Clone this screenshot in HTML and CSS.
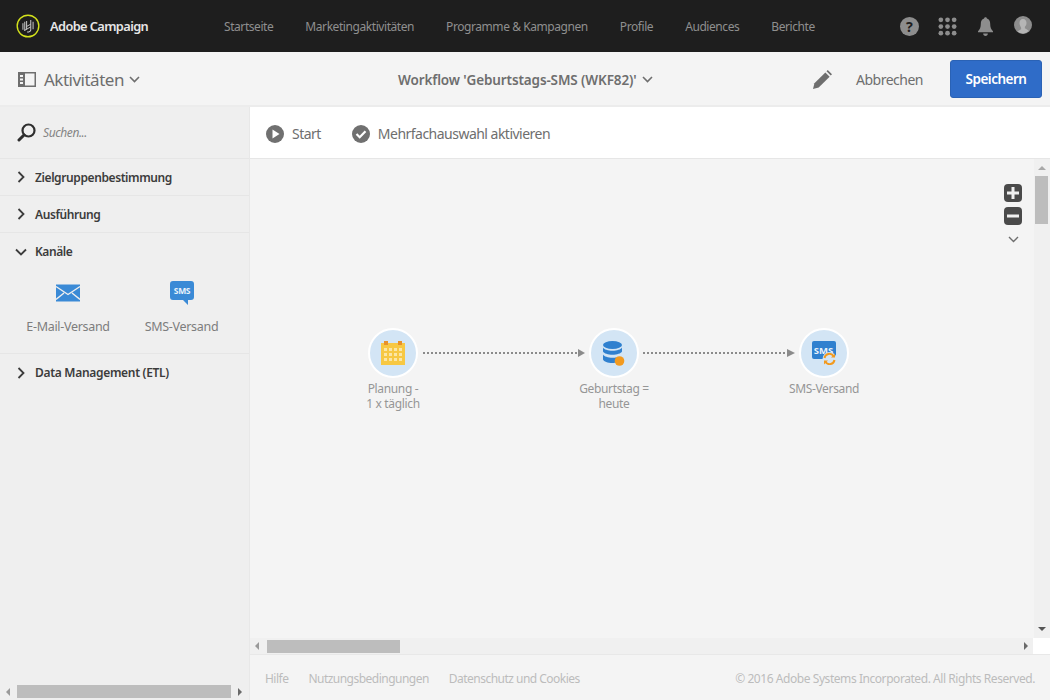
FILE: index.html
```html
<!DOCTYPE html>
<html>
	<head>
		<meta charset="utf-8" />
		<title>Adobe Campaign</title>
		<link rel="stylesheet" href="styles.css">
	</head>
	<body>
		<header class="top-bar">
			<div class="brand">
				<svg class="brand-logo" width="24" height="24" viewBox="0 0 26 26" fill="none">
					<circle cx="13" cy="13" r="11.700" stroke="#d4e21c" stroke-width="1.500"/>
					<path d="M7.500 10v7M9.500 8.500v10M11.500 7.500v9.500M16 6.500v10.500c0 1.500-1.500 2.500-4 2.500M18.500 8.500v8" stroke="#c9c9c9" stroke-width="1.100"/>
					<path d="M11.500 13.500l4.500-2.500M9.500 17.500l6.500-3.500" stroke="#c9c9c9" stroke-width="1"/>
				</svg>
				<span class="brand-name">Adobe Campaign</span>
			</div>
			<nav class="main-nav">
				<a>Startseite</a>
				<a>Marketingaktivitäten</a>
				<a>Programme &amp; Kampagnen</a>
				<a>Profile</a>
				<a>Audiences</a>
				<a>Berichte</a>
			</nav>
			<div class="top-icons">
				<svg width="19" height="19" viewBox="0 0 20 20">
					<circle cx="10" cy="10" r="10" fill="#8d8d8d"/>
					<text x="10" y="15.500" text-anchor="middle" class="help-mark">?</text>
				</svg>
				<svg class="apps" width="19" height="19" viewBox="0 0 20 20" fill="#8d8d8d">
					<circle cx="3" cy="3" r="2.500"/><circle cx="10" cy="3" r="2.500"/><circle cx="17" cy="3" r="2.500"/>
					<circle cx="3" cy="10" r="2.500"/><circle cx="10" cy="10" r="2.500"/><circle cx="17" cy="10" r="2.500"/>
					<circle cx="3" cy="17" r="2.500"/><circle cx="10" cy="17" r="2.500"/><circle cx="17" cy="17" r="2.500"/>
				</svg>
				<svg class="bell" width="15" height="19" viewBox="0 0 16 20" fill="#8d8d8d">
					<path d="M8 0c1 0 1.500.7 1.500 1.500C12 2.300 13 4.500 13 7c0 4 1 6 3 8v1H0v-1c2-2 3-4 3-8 0-2.500 1-4.700 3.500-5.500C6.500.7 7 0 8 0z"/>
					<path d="M5.500 17.500h5C10.500 19 9.500 20 8 20s-2.500-1-2.500-2.500z"/>
				</svg>
				<svg class="avatar" width="18" height="18" viewBox="0 0 18 18">
					<circle cx="9" cy="9" r="9" fill="#8d8d8d"/>
					<path d="M9 3c2.300 0 3.500 1.700 3.500 4 0 1.700-.8 3-1.600 3.800v1.400l3.700 2.300C13 16.800 11.100 17.500 9 17.500s-4-.7-5.600-2l3.700-2.300v-1.400C6.300 10 5.500 8.700 5.500 7 5.500 4.700 6.700 3 9 3z" fill="#b5b5b5"/>
				</svg>
			</div>
		</header>

		<div class="sub-bar">
			<div class="panel-title">
				<svg width="18" height="15" viewBox="0 0 18 15">
					<path d="M0 0h18v15H0z" fill="#6e6e6e"/>
					<path d="M7 1.500h9.500v12H7z" fill="#f4f4f4"/>
					<path d="M2 3h3v2H2zM2 6.500h3v2H2zM2 10h3v2H2z" fill="#f4f4f4"/>
				</svg>
				<span>Aktivitäten</span>
				<svg class="chev" width="11" height="7" viewBox="0 0 11 7"><path d="M1 1l4.500 4.500L10 1" /></svg>
			</div>
			<div class="workflow-title">
				<span>Workflow 'Geburtstags-SMS (WKF82)'</span>
				<svg class="chev" width="11" height="7" viewBox="0 0 11 7"><path d="M1 1l4.500 4.500L10 1" /></svg>
			</div>
			<div class="actions">
				<svg width="19" height="19" viewBox="0 0 20 20" fill="#6e6e6e">
					<path d="M0 20l1.500-6L13 2.500l4.500 4.500L6 18.500z"/>
					<path d="M14.200 1.300L15.500 0 20 4.500l-1.300 1.300z"/>
				</svg>
				<a class="cancel">Abbrechen</a>
				<button class="save-btn">Speichern</button>
			</div>
		</div>

		<div class="main">
			<aside class="sidebar">
				<div class="search">
					<svg width="19" height="19" viewBox="0 0 19 19" fill="none" stroke="#2e2e2e">
						<circle cx="11.500" cy="7.500" r="6" stroke-width="2.200"/>
						<path d="M7 12l-5 5" stroke-width="3" stroke-linecap="round"/>
					</svg>
					<span>Suchen...</span>
				</div>
				<div class="group">
					<svg class="arrow" width="8" height="12" viewBox="0 0 8 12"><path d="M1.500 1l5 5-5 5"/></svg>
					<span>Zielgruppenbestimmung</span>
				</div>
				<div class="group">
					<svg class="arrow" width="8" height="12" viewBox="0 0 8 12"><path d="M1.500 1l5 5-5 5"/></svg>
					<span>Ausführung</span>
				</div>
				<div class="group-open">
					<div class="group-head">
						<svg class="arrow" width="12" height="8" viewBox="0 0 12 8"><path d="M1 1.500l5 5 5-5"/></svg>
						<span>Kanäle</span>
					</div>
					<div class="channels">
						<div class="channel">
							<svg width="24" height="17" viewBox="0 0 24 17">
								<path d="M0 0h24v17H0z" fill="#3a8ad6"/>
								<path d="M0 2l12 8 12-8M0 15l8-6.500M24 15l-8-6.500" fill="none" stroke="#efefef" stroke-width="1.400"/>
							</svg>
							<span>E-Mail-Versand</span>
						</div>
						<div class="channel">
							<svg width="24" height="24" viewBox="0 0 24 24">
								<path d="M3 0h18a3 3 0 0 1 3 3v13a3 3 0 0 1-3 3h-3v5l-5-5H3a3 3 0 0 1-3-3V3a3 3 0 0 1 3-3z" fill="#3a8ad6"/>
								<text x="12" y="13" text-anchor="middle" class="sms-mark">SMS</text>
							</svg>
							<span>SMS-Versand</span>
						</div>
					</div>
				</div>
				<div class="group group-last">
					<svg class="arrow" width="8" height="12" viewBox="0 0 8 12"><path d="M1.500 1l5 5-5 5"/></svg>
					<span>Data Management (ETL)</span>
				</div>
				<div class="side-scroll">
					<i class="arr arr-left"></i>
					<div class="side-thumb"></div>
					<i class="arr arr-right dark"></i>
				</div>
			</aside>

			<section class="content">
				<div class="toolbar">
					<div class="tool">
						<svg width="18" height="18" viewBox="0 0 18 18">
							<circle cx="9" cy="9" r="9" fill="#707070"/>
							<path d="M6.500 4.500l7 4.500-7 4.500z" fill="#fff"/>
						</svg>
						<span>Start</span>
					</div>
					<div class="tool">
						<svg width="18" height="18" viewBox="0 0 18 18">
							<circle cx="9" cy="9" r="9" fill="#707070"/>
							<path d="M4.500 9l3.200 3.200 5.800-6" fill="none" stroke="#fff" stroke-width="2.200"/>
						</svg>
						<span>Mehrfachauswahl aktivieren</span>
					</div>
				</div>

				<div class="canvas-wrap">
					<div class="canvas">
						<div class="node node-plan">
							<div class="node-circle">
								<svg width="24" height="24" viewBox="0 0 24 24">
									<path d="M0 2h24v22H0z" fill="#f7c843"/>
									<path d="M3 0h4v4H3zM17 0h4v4h-4z" fill="#e8912a"/>
									<path d="M3 7h3v3H3zM8 7h3v3H8zM13 7h3v3h-3zM18 7h3v3h-3zM3 12h3v3H3zM8 12h3v3H8zM13 12h3v3h-3zM18 12h3v3h-3zM3 17h3v3H3zM8 17h3v3H8zM13 17h3v3h-3zM18 17h3v3h-3z" fill="#fbe6a6"/>
								</svg>
							</div>
							<div class="node-label">Planung -<br>1 x täglich</div>
						</div>
						<svg class="link link-one" width="164" height="10" viewBox="0 0 164 10">
							<path d="M0 5h155" stroke="#8b8b8b" stroke-width="2" stroke-dasharray="2 2"/>
							<path d="M155 1l7 4-7 4z" fill="#8b8b8b"/>
						</svg>
						<div class="node node-birth">
							<div class="node-circle">
								<svg width="24" height="25" viewBox="0 0 24 25">
									<ellipse cx="10.500" cy="4" rx="9.500" ry="4" fill="#2f80cf"/>
									<path d="M1 6.500c1 2 5 3.200 9.500 3.200S19 8.500 20 6.500v4c-1 2-5 3.200-9.500 3.200S2 12.500 1 10.500z" fill="#2f80cf"/>
									<path d="M1 13.500c1 2 5 3.200 9.500 3.200 2 0 3 0 4-.5l1 5c-2 .6-3.500.8-5 .8-5 0-8.500-1.500-9.500-3.500z" fill="#2f80cf"/>
									<circle cx="17.500" cy="20" r="4.800" fill="#f29a1f"/>
								</svg>
							</div>
							<div class="node-label">Geburtstag =<br>heute</div>
						</div>
						<svg class="link link-two" width="152" height="10" viewBox="0 0 152 10">
							<path d="M0 5h144" stroke="#8b8b8b" stroke-width="2" stroke-dasharray="2 2"/>
							<path d="M144 1l8 4-8 4z" fill="#8b8b8b"/>
						</svg>
						<div class="node node-sms">
							<div class="node-circle">
								<svg width="24" height="24" viewBox="0 0 24 24">
									<path d="M2 0h20a2 2 0 0 1 2 2v16H2a2 2 0 0 1-2-2V2a2 2 0 0 1 2-2z" fill="#2f80cf"/>
									<text x="11.500" y="12.500" text-anchor="middle" class="sms-mark sms-large">SMS</text>
									<circle cx="17.500" cy="18" r="7" fill="#d3e5f5"/>
									<path d="M12.500 17a5 5 0 0 1 9-2M22.500 19a5 5 0 0 1-9 2" fill="none" stroke="#f29a1f" stroke-width="2"/>
									<path d="M23 12.500v4h-4zM12 23.500v-4h4z" fill="#f29a1f"/>
								</svg>
							</div>
							<div class="node-label">SMS-Versand</div>
						</div>

						<div class="zoom-tools">
							<div class="zoom-btn">
								<svg width="18" height="18" viewBox="0 0 18 18"><path d="M3 7.500h4.500V3h3v4.500H15v3h-4.500V15h-3v-4.500H3z" fill="#f0f0f0"/></svg>
							</div>
							<div class="zoom-btn">
								<svg width="18" height="18" viewBox="0 0 18 18"><path d="M3 7.500h12v3H3z" fill="#f0f0f0"/></svg>
							</div>
							<svg class="zoom-more" width="11" height="7" viewBox="0 0 11 7"><path d="M1 1l4.500 4.500L10 1"/></svg>
						</div>
					</div>
					<div class="v-scroll">
						<i class="arr arr-up"></i>
						<div class="v-thumb"></div>
						<i class="arr arr-down"></i>
					</div>
				</div>

				<div class="h-scroll-row">
					<div class="h-scroll">
						<i class="arr arr-left"></i>
						<div class="h-track"><div class="h-thumb"></div></div>
						<i class="arr arr-right dark"></i>
					</div>
					<div class="corner"></div>
				</div>

				<footer class="footer">
					<div class="footer-links">
						<a>Hilfe</a>
						<a>Nutzungsbedingungen</a>
						<a>Datenschutz und Cookies</a>
					</div>
					<div class="copyright">© 2016 Adobe Systems Incorporated. All Rights Reserved.</div>
				</footer>
			</section>
		</div>
	</body>
</html>
```

FILE: styles.css
```css
* {
	box-sizing: border-box;
}
html, body {
	height: 100%;
}
body {
	margin: 0;
	height: 700px;
	overflow: hidden;
	display: flex;
	flex-direction: column;
	font-family: "Noto Sans", Arial, sans-serif;
	font-size: 13px;
	background: #f4f4f4;
	color: #6e6e6e;
}
svg {
	display: block;
	flex: none;
}
.top-bar {
	height: 52px;
	flex: none;
	background: #1e1e1e;
	display: flex;
	align-items: center;
	padding: 0 18px 0 16px;
}
.brand {
	width: 208px;
	display: flex;
	align-items: center;
	gap: 10px;
}
.brand-name {
	color: #e6e6e6;
	font-size: 12.800px;
	font-weight: 600;
	letter-spacing: -0.6px;
}
.main-nav {
	display: flex;
	gap: 32px;
	flex: 1;
}
.main-nav a {
	color: #8f8f8f;
	font-size: 12px;
	letter-spacing: -0.43px;
}
.top-icons {
	display: flex;
	align-items: center;
	gap: 20px;
}
.apps {
	margin-left: -1px;
}
.bell {
	margin-left: 1px;
}
.avatar {
	margin: -2px 0 0 1px;
}
.help-mark {
	font-size: 15px;
	font-weight: 700;
	fill: #1e1e1e;
}
.sub-bar {
	height: 55px;
	flex: none;
	display: grid;
	grid-template-columns: 380px auto 1fr;
	align-items: center;
	padding: 2px 8px 0 18px;
	background: #f4f4f4;
	border-bottom: 2px solid #ececec;
}
.panel-title {
	display: flex;
	align-items: center;
	gap: 8px;
	font-size: 17px;
	letter-spacing: -0.5px;
}
.panel-title .chev {
	margin-left: -3px;
}
.chev {
	fill: none;
	stroke: #6e6e6e;
	stroke-width: 1.600;
}
.workflow-title {
	display: flex;
	align-items: center;
	gap: 5px;
	font-size: 13.500px;
	font-weight: 600;
	letter-spacing: -0.12px;
}
.actions {
	display: flex;
	align-items: center;
	justify-content: flex-end;
}
.cancel {
	margin: 0 27px 0 24px;
	font-size: 14px;
	letter-spacing: -0.5px;
}
.save-btn {
	width: 92px;
	height: 38px;
	margin-top: -1px;
	padding: 0;
	border: 1px solid #2a62b5;
	border-radius: 3px;
	background: #2f6cc8;
	color: #fff;
	font-family: inherit;
	font-size: 13.500px;
	font-weight: 600;
	letter-spacing: -0.5px;
}
.main {
	flex: 1;
	display: flex;
	min-height: 0;
}
.sidebar {
	width: 250px;
	flex: none;
	position: relative;
	background: #efefef;
	border-right: 1px solid #e8e8e8;
}
.search {
	height: 52px;
	display: flex;
	align-items: center;
	gap: 7px;
	padding-left: 17px;
	border-bottom: 1px solid #e6e6e6;
}
.search span {
	font-size: 12px;
	font-style: italic;
	color: #858585;
	letter-spacing: -0.4px;
}
.group, .group-head {
	height: 37px;
	display: flex;
	align-items: center;
	padding-left: 17px;
	font-size: 12px;
	font-weight: 600;
	color: #3c3c3c;
	letter-spacing: -0.4px;
	border-bottom: 1px solid #e6e6e6;
}
.group span {
	margin-left: 10px;
}
.group-head {
	border-bottom: 0;
	padding-left: 15px;
}
.group-head span {
	margin-left: 8px;
}
.group-last {
	border-bottom: 0;
	letter-spacing: -0.3px;
}
.group-open {
	height: 121px;
	border-bottom: 1px solid #e6e6e6;
}
.arrow {
	fill: none;
	stroke: #3c3c3c;
	stroke-width: 1.800;
}
.channels {
	display: grid;
	grid-template-columns: 136px 91px;
	margin-top: 11px;
}
.channel {
	display: flex;
	flex-direction: column;
	align-items: center;
	color: #7d7d7d;
	font-size: 12.500px;
	letter-spacing: -0.3px;
}
.channel svg {
	height: 24px;
	margin-bottom: 13px;
}
.sms-mark {
	font-size: 8.500px;
	font-weight: 700;
	fill: #e8f2fb;
}
.sms-large {
	font-size: 9.500px;
}
.side-scroll {
	position: absolute;
	left: 0;
	right: 0;
	bottom: 0;
	height: 16px;
	display: flex;
	align-items: center;
	padding-bottom: 1px;
	background: #efefef;
}
.side-thumb {
	width: 214px;
	height: 13px;
	margin-left: 7px;
	background: #bdbdbd;
}
.side-scroll .arr-left {
	margin-left: 6px;
}
.side-scroll .arr-right {
	margin-left: 7px;
}
.arr {
	display: block;
	width: 0;
	height: 0;
	flex: none;
	border-style: solid;
	border-color: transparent;
}
.arr-left {
	border-width: 4px 4px 4px 0;
	border-right-color: #9a9a9a;
}
.arr-right {
	border-width: 4px 0 4px 4px;
	border-left-color: #6a6a6a;
}
.arr-up {
	border-width: 0 4px 4px;
	border-bottom-color: #a8a8a8;
}
.arr-down {
	border-width: 4px 4px 0;
	border-top-color: #555;
}
.content {
	flex: 1;
	min-width: 0;
	display: flex;
	flex-direction: column;
}
.toolbar {
	height: 52px;
	flex: none;
	display: flex;
	align-items: center;
	gap: 31px;
	padding: 2px 0 0 16px;
	background: #fff;
	border-bottom: 1px solid #e6e6e6;
}
.tool {
	display: flex;
	align-items: center;
	gap: 8px;
	font-size: 14px;
	color: #6e6e6e;
	letter-spacing: -0.52px;
}
.canvas-wrap {
	flex: 1;
	display: flex;
	min-height: 0;
}
.canvas {
	flex: 1;
	position: relative;
	background: #f4f4f4;
}
.node {
	position: absolute;
	top: 169px;
	width: 100px;
	display: flex;
	flex-direction: column;
	align-items: center;
}
.node-plan {
	left: 93px;
}
.node-birth {
	left: 314px;
}
.node-sms {
	left: 524px;
}
.node-circle {
	width: 50px;
	height: 50px;
	border-radius: 50%;
	background: #d3e5f5;
	border: 2px solid #fff;
	display: flex;
	align-items: center;
	justify-content: center;
}
.node-label {
	margin-top: 3px;
	text-align: center;
	font-size: 12px;
	line-height: 15px;
	color: #969696;
	letter-spacing: -0.35px;
	white-space: nowrap;
}
.link {
	position: absolute;
	top: 189px;
}
.link-one {
	left: 173px;
}
.link-two {
	left: 393px;
}
.zoom-tools {
	position: absolute;
	top: 25px;
	right: 12px;
	width: 18px;
	display: flex;
	flex-direction: column;
	align-items: center;
	gap: 5px;
}
.zoom-btn {
	width: 18px;
	height: 18px;
	border-radius: 4px;
	background: #4a4a4a;
}
.zoom-more {
	margin-top: 6px;
	fill: none;
	stroke: #6e6e6e;
	stroke-width: 1.400;
}
.v-scroll {
	width: 16px;
	flex: none;
	display: flex;
	flex-direction: column;
	align-items: center;
	background: #f0f0f0;
	padding: 7px 1px 0 0;
}
.v-thumb {
	width: 13px;
	height: 48px;
	margin-top: 6px;
	background: #bdbdbd;
}
.v-scroll .arr-down {
	margin-top: auto;
	margin-bottom: 7px;
}
.h-scroll-row {
	height: 17px;
	flex: none;
	display: flex;
	border-bottom: 1px solid #e8e8e8;
}
.h-scroll {
	flex: 1;
	display: flex;
	align-items: center;
	padding: 0 5px 0 5px;
	background: #f0f0f0;
}
.h-track {
	flex: 1;
	padding-left: 8px;
}
.h-thumb {
	width: 133px;
	height: 13px;
	background: #bdbdbd;
}
.corner {
	width: 17px;
	background: #fff;
}
.footer {
	height: 45px;
	flex: none;
	display: flex;
	align-items: center;
	justify-content: space-between;
	padding: 2px 15px 0;
	font-size: 12px;
	color: #bcbcbc;
	letter-spacing: -0.44px;
}
.footer-links {
	display: flex;
	gap: 20px;
	letter-spacing: -0.52px;
}
```
